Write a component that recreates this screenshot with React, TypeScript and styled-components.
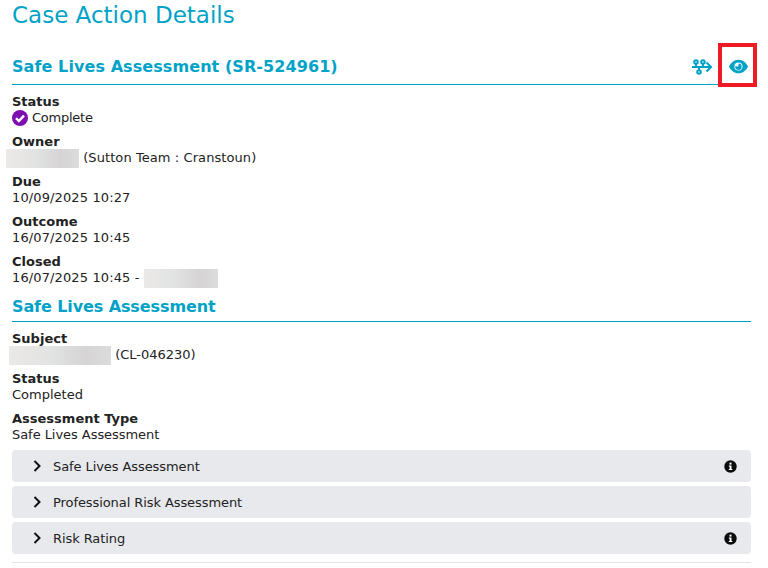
import React from "react";
import styled, { createGlobalStyle } from "styled-components";

const GlobalStyle = createGlobalStyle`
  html, body {
    margin: 0;
    padding: 0;
    background: #fff;
  }
  body {
    font-family: "DejaVu Sans", Verdana, sans-serif;
    font-size: 13px;
    line-height: 16px;
    color: #222;
  }
`;

const Page = styled.div`
  position: relative;
  width: 739px;
  height: 568px;
  overflow: hidden;
  padding: 0 17px 0 12px;
`;

const PageTitle = styled.h1`
  margin: 0;
  height: 43px;
  padding-top: 1px;
  box-sizing: border-box;
  font-size: 23px;
  line-height: 28px;
  font-weight: 400;
  color: #00a3c7;
`;

const SectionHeader = styled.div`
  display: flex;
  align-items: center;
  justify-content: space-between;
  height: 35px;
  padding: 6px 3px 0 0;
  border-bottom: 1px solid #00a3c7;
`;

const SectionTitle = styled.h2<{ $track?: number }>`
  margin: 0;
  font-size: 16px;
  line-height: 22px;
  font-weight: 700;
  letter-spacing: ${(p) => p.$track ?? 0.08}px;
  color: #00a3c7;
`;

const Tools = styled.div`
  display: flex;
  align-items: center;
  gap: 17px;
`;

const ToolButton = styled.span`
  display: flex;
  color: #00a3c7;
`;

const Highlight = styled.div`
  position: absolute;
  left: 718px;
  top: 43px;
  width: 39px;
  height: 44px;
  box-sizing: border-box;
  border: 4px solid #ed1c24;
`;

const Fields = styled.div`
  display: flex;
  flex-direction: column;
  gap: 8px;
  padding-top: 9px;
`;

const Field = styled.div``;

const Label = styled.div`
  font-weight: 700;
`;

const Value = styled.div<{ $track?: number }>`
  display: flex;
  align-items: center;
  height: 16px;
  white-space: pre;
  letter-spacing: ${(p) => p.$track ?? 0}px;
`;

const Redacted = styled.span<{ $w: number; $shift?: number }>`
  display: inline-block;
  width: ${(p) => p.$w}px;
  height: 19px;
  margin-left: ${(p) => p.$shift ?? 0}px;
  background: linear-gradient(90deg, #ebe9e7 0%, #e2e3e3 40%, #d6d4d5 75%, #dcdcdc 100%);
`;

const SubHeader = styled.div`
  height: 25px;
  margin-top: 4px;
  padding-top: 6px;
  border-bottom: 1px solid #00a3c7;
`;

const Accordions = styled.div`
  display: flex;
  flex-direction: column;
  gap: 4px;
  margin-top: 7px;
`;

const AccordionRow = styled.div`
  display: flex;
  align-items: center;
  height: 32px;
  padding: 0 14px 0 21px;
  border-radius: 4px;
  background: #e8e9ed;
  color: #222;
`;

const Chevron = styled.span`
  display: flex;
  width: 20px;
  color: #111;
`;

const RowTitle = styled.span`
  flex: 1;
  padding-top: 2px;
  letter-spacing: -0.08px;
`;

const Rule = styled.div`
  margin-top: 8px;
  height: 1px;
  background: #e4e4e4;
`;

const CheckBadge = styled.svg`
  margin-right: 4px;
  flex: none;
`;

const RouteIcon = () => (
  <svg width="20" height="16" viewBox="0 0 20 16" fill="none" stroke="currentColor" strokeWidth="2">
    <circle cx="4" cy="3" r="1.8" />
    <circle cx="11" cy="3" r="1.8" />
    <circle cx="7" cy="13" r="1.8" />
    <path d="M0 8h18.5M4 5v3M11 5v3M7 8v3M14.5 3.5L19 8l-4.5 4.5" />
  </svg>
);

const EyeIcon = () => (
  <svg width="19" height="15" viewBox="0 0 18 14">
    <path
      fill="currentColor"
      fillRule="evenodd"
      d="M9 .5C4.8.5 1.6 3.4 0 7c1.6 3.6 4.8 6.5 9 6.5s7.4-2.9 9-6.5C16.4 3.4 13.2.5 9 .5zM9 3.1a3.9 3.9 0 1 1 0 7.8 3.9 3.9 0 0 1 0-7.8z"
    />
    <path fill="currentColor" d="M9.2 4.2l-.4 2.9-2.8-.3A3 3 0 1 0 9.2 4.2z" />
  </svg>
);

const ChevronIcon = () => (
  <svg width="9" height="12" viewBox="0 0 9 12" fill="none" stroke="currentColor" strokeWidth="2">
    <path d="M1.5 1l5 5-5 5" />
  </svg>
);

const InfoIcon = () => (
  <svg width="13" height="13" viewBox="0 0 13 13">
    <circle cx="6.5" cy="6.5" r="6.2" fill="#0c0c0c" />
    <rect x="5.5" y="2.6" width="2" height="2" fill="#fff" />
    <path d="M4.8 5.5h2.7v3.4h.8v1H4.8v-1h.8V6.5h-.8z" fill="#fff" />
  </svg>
);

const accordions = [
  { title: "Safe Lives Assessment", info: true },
  { title: "Professional Risk Assessment", info: false },
  { title: "Risk Rating", info: true },
];

export default function App() {
  return (
    <Page>
      <GlobalStyle />
      <PageTitle>Case Action Details</PageTitle>
      <SectionHeader>
        <SectionTitle>Safe Lives Assessment (SR-524961)</SectionTitle>
        <Tools>
          <ToolButton>
            <RouteIcon />
          </ToolButton>
          <ToolButton>
            <EyeIcon />
          </ToolButton>
        </Tools>
      </SectionHeader>
      <Highlight />
      <Fields>
        <Field>
          <Label>Status</Label>
          <Value $track={-0.25}>
            <CheckBadge width="16" height="16" viewBox="0 0 16 16">
              <circle cx="8" cy="8" r="8" fill="#7d0fb0" />
              <path d="M4 8.2l2.8 2.8 5.2-5.4" fill="none" stroke="#fff" strokeWidth="2.4" />
            </CheckBadge>
            Complete
          </Value>
        </Field>
        <Field>
          <Label>Owner</Label>
          <Value $track={0.08}>
            <Redacted $w={73} $shift={-6} /> (Sutton Team : Cranstoun)
          </Value>
        </Field>
        <Field>
          <Label>Due</Label>
          <Value $track={0.12}>10/09/2025 10:27</Value>
        </Field>
        <Field>
          <Label>Outcome</Label>
          <Value $track={0.12}>16/07/2025 10:45</Value>
        </Field>
        <Field>
          <Label>Closed</Label>
          <Value $track={0.12}>
            16/07/2025 10:45 - <Redacted $w={74} />
          </Value>
        </Field>
      </Fields>
      <SubHeader>
        <SectionTitle $track={-0.1}>Safe Lives Assessment</SectionTitle>
      </SubHeader>
      <Fields>
        <Field>
          <Label>Subject</Label>
          <Value>
            <Redacted $w={102} $shift={-3} /> (CL-046230)
          </Value>
        </Field>
        <Field>
          <Label>Status</Label>
          <Value>Completed</Value>
        </Field>
        <Field>
          <Label>Assessment Type</Label>
          <Value $track={-0.05}>Safe Lives Assessment</Value>
        </Field>
      </Fields>
      <Accordions>
        {accordions.map((row) => (
          <AccordionRow key={row.title}>
            <Chevron>
              <ChevronIcon />
            </Chevron>
            <RowTitle>{row.title}</RowTitle>
            {row.info && <InfoIcon />}
          </AccordionRow>
        ))}
      </Accordions>
      <Rule />
    </Page>
  );
}
